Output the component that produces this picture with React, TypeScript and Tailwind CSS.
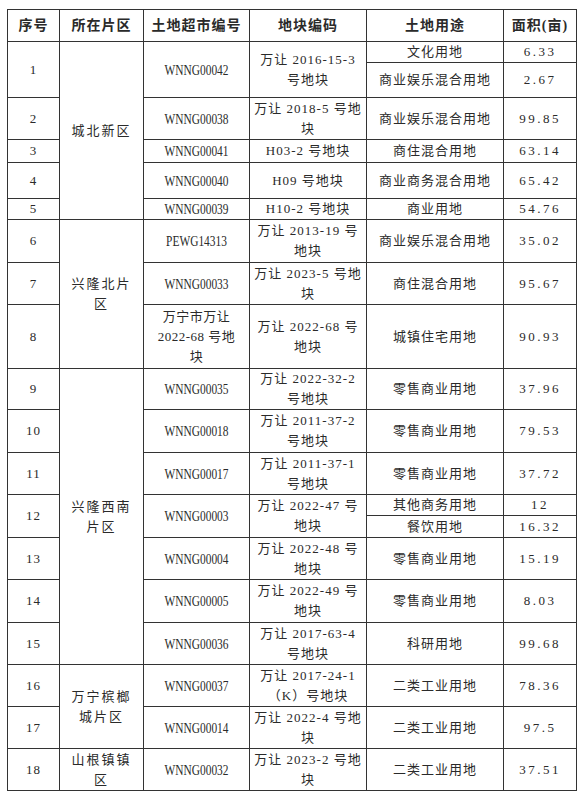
import * as React from 'react';

type Use = { name: string; area: string; h: string };

interface LandRow {
    no: string;
    code: string[];
    plot: string[];
    uses: Use[];
    district?: { lines: string[]; span: number };
}

const rows: LandRow[] = [
    {
        no: '1',
        code: ['WNNG00042'],
        plot: ['万让 2016-15-3', '号地块'],
        uses: [
            { name: '文化用地', area: '6.33', h: 'h-[21px]' },
            { name: '商业娱乐混合用地', area: '2.67', h: 'h-[35px]' },
        ],
        district: { lines: ['城北新区'], span: 6 },
    },
    { no: '2', code: ['WNNG00038'], plot: ['万让 2018-5 号地', '块'], uses: [{ name: '商业娱乐混合用地', area: '99.85', h: 'h-[42px]' }] },
    { no: '3', code: ['WNNG00041'], plot: ['H03-2 号地块'], uses: [{ name: '商住混合用地', area: '63.14', h: 'h-[23px]' }] },
    { no: '4', code: ['WNNG00040'], plot: ['H09 号地块'], uses: [{ name: '商业商务混合用地', area: '65.42', h: 'h-[36px]' }] },
    { no: '5', code: ['WNNG00039'], plot: ['H10-2 号地块'], uses: [{ name: '商业用地', area: '54.76', h: 'h-[20px]' }] },
    {
        no: '6',
        code: ['PEWG14313'],
        plot: ['万让 2013-19 号', '地块'],
        uses: [{ name: '商业娱乐混合用地', area: '35.02', h: 'h-[43px]' }],
        district: { lines: ['兴隆北片', '区'], span: 3 },
    },
    { no: '7', code: ['WNNG00033'], plot: ['万让 2023-5 号地', '块'], uses: [{ name: '商住混合用地', area: '95.67', h: 'h-[42px]' }] },
    { no: '8', code: ['万宁市万让', '2022-68 号地', '块'], plot: ['万让 2022-68 号', '地块'], uses: [{ name: '城镇住宅用地', area: '90.93', h: 'h-[64px]' }] },
    {
        no: '9',
        code: ['WNNG00035'],
        plot: ['万让 2022-32-2', '号地块'],
        uses: [{ name: '零售商业用地', area: '37.96', h: 'h-[41px]' }],
        district: { lines: ['兴隆西南', '片区'], span: 8 },
    },
    { no: '10', code: ['WNNG00018'], plot: ['万让 2011-37-2', '号地块'], uses: [{ name: '零售商业用地', area: '79.53', h: 'h-[43px]' }] },
    { no: '11', code: ['WNNG00017'], plot: ['万让 2011-37-1', '号地块'], uses: [{ name: '零售商业用地', area: '37.72', h: 'h-[42px]' }] },
    {
        no: '12',
        code: ['WNNG00003'],
        plot: ['万让 2022-47 号', '地块'],
        uses: [
            { name: '其他商务用地', area: '12', h: 'h-[21px]' },
            { name: '餐饮用地', area: '16.32', h: 'h-[22px]' },
        ],
    },
    { no: '13', code: ['WNNG00004'], plot: ['万让 2022-48 号', '地块'], uses: [{ name: '零售商业用地', area: '15.19', h: 'h-[42px]' }] },
    { no: '14', code: ['WNNG00005'], plot: ['万让 2022-49 号', '地块'], uses: [{ name: '零售商业用地', area: '8.03', h: 'h-[43px]' }] },
    { no: '15', code: ['WNNG00036'], plot: ['万让 2017-63-4', '号地块'], uses: [{ name: '科研用地', area: '99.68', h: 'h-[42px]' }] },
    {
        no: '16',
        code: ['WNNG00037'],
        plot: ['万让 2017-24-1', '（K）号地块'],
        uses: [{ name: '二类工业用地', area: '78.36', h: 'h-[42px]' }],
        district: { lines: ['万宁槟榔', '城片区'], span: 2 },
    },
    { no: '17', code: ['WNNG00014'], plot: ['万让 2022-4 号地', '块'], uses: [{ name: '二类工业用地', area: '97.5', h: 'h-[42px]' }] },
    {
        no: '18',
        code: ['WNNG00032'],
        plot: ['万让 2023-2 号地', '块'],
        uses: [{ name: '二类工业用地', area: '37.51', h: 'h-[42px]' }],
        district: { lines: ['山根镇镇', '区'], span: 1 },
    },
];

const cell = 'border border-[#333] p-0 text-center align-middle';

const Lines = ({ lines }: { lines: string[] }) => (
    <>
        {lines.map((l, i) => (
            <div key={i}>{l}</div>
        ))}
    </>
);

export default function App() {
    return (
        <div className="w-[586px] h-[809px] bg-white pt-[9px] pl-[7px] font-['Liberation_Serif','Noto_Sans_CJK_SC',serif] text-[13px] leading-[20px] text-[#2a2a2a]">
            <table className="table-fixed border-collapse w-[569px]">
                <colgroup>
                    <col className="w-[52px]" />
                    <col className="w-[84px]" />
                    <col className="w-[106px]" />
                    <col className="w-[117px]" />
                    <col className="w-[137px]" />
                    <col className="w-[73px]" />
                </colgroup>
                <thead>
                    <tr className="h-[32px] font-bold text-[14px] tracking-[1px]">
                        <th className={cell}>序号</th>
                        <th className={cell}>所在片区</th>
                        <th className={cell}>土地超市编号</th>
                        <th className={cell}>地块编码</th>
                        <th className={cell}>土地用途</th>
                        <th className={cell}>面积(亩)</th>
                    </tr>
                </thead>
                <tbody>
                    {rows.flatMap((r) =>
                        r.uses.map((u, i) => (
                            <tr key={r.no + '-' + i} className={u.h}>
                                {i === 0 && (
                                    <>
                                        <td rowSpan={r.uses.length} className={cell + ' tracking-[1px]'}>
                                            {r.no}
                                        </td>
                                        {r.district && (
                                            <td rowSpan={r.district.span} className={cell + ' tracking-[2px]'}>
                                                <Lines lines={r.district.lines} />
                                            </td>
                                        )}
                                        <td rowSpan={r.uses.length} className={cell + ' tracking-[0.5px]'}>
                                            {r.code.length === 1 ? (
                                                <div className="scale-x-[0.76] text-[15px] leading-[20px] tracking-[0px] whitespace-nowrap">
                                                    {r.code[0]}
                                                </div>
                                            ) : (
                                                <Lines lines={r.code} />
                                            )}
                                        </td>
                                        <td rowSpan={r.uses.length} className={cell + ' tracking-[1px]'}>
                                            <Lines lines={r.plot} />
                                        </td>
                                    </>
                                )}
                                <td className={cell + ' tracking-[1px]'}>{u.name}</td>
                                <td className={cell + ' tracking-[2.5px]'}>{u.area}</td>
                            </tr>
                        ))
                    )}
                </tbody>
            </table>
        </div>
    );
}
